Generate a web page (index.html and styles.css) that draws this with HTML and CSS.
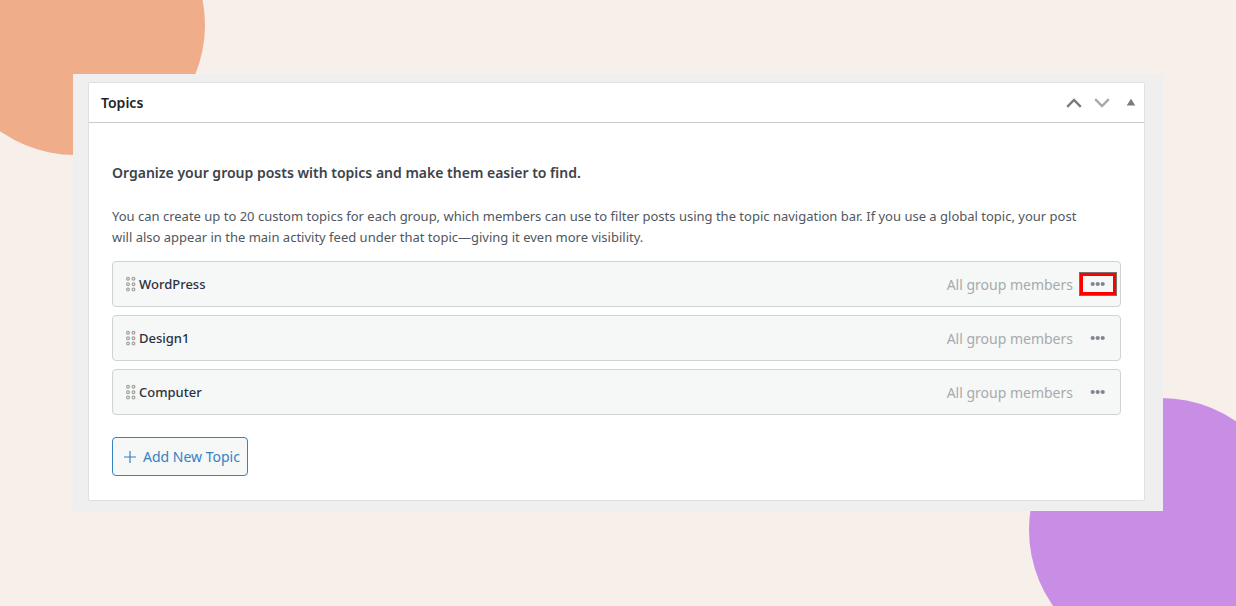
FILE: index.html
```html
<!DOCTYPE html>
<html lang="en">
<head>
<meta charset="utf-8">
<meta name="viewport" content="width=device-width, initial-scale=1">
<title>Topics</title>
<link rel="stylesheet" href="styles.css">
</head>
<body>
<div class="stage">
<div class="blob blob-orange"></div>
<div class="blob blob-purple"></div>
<main class="frame">
  <section class="card">
    <header class="card-header">
      <h2 class="card-title">Topics</h2>
      <div class="card-actions">
        <button class="icon-button" type="button" aria-label="Move up"><svg width="16" height="10" viewBox="0 0 16 10"><path d="M1.200 8.800 8 2l6.800 6.800" fill="none" stroke="#787c82" stroke-width="2.400"/></svg></button>
        <button class="icon-button" type="button" aria-label="Move down"><svg width="16" height="10" viewBox="0 0 16 10"><path d="M1.200 1.200 8 8l6.800-6.800" fill="none" stroke="#a7aaad" stroke-width="2.400"/></svg></button>
        <button class="icon-button toggle" type="button" aria-label="Toggle panel"><svg width="10" height="10" viewBox="0 0 10 10"><path d="M5 .8 9.300 7.500H.7z" fill="#787c82"/></svg></button>
      </div>
    </header>
    <div class="card-body">
      <h3 class="lead">Organize your group posts with topics and make them easier to find.</h3>
      <p class="description">You can create up to 20 custom topics for each group, which members can use to filter posts using the topic navigation bar. If you use a global topic, your post will also appear in the main activity feed under that topic—giving it even more visibility.</p>
      <ul class="topics">
        <li class="topic">
          <svg class="grip" width="10" height="16" viewBox="0 0 10 16"><g fill="none" stroke="#a3a19c" stroke-width="1.200"><circle cx="2" cy="2.800" r="1.400"/><circle cx="7.500" cy="2.800" r="1.400"/><circle cx="2" cy="8.200" r="1.400"/><circle cx="7.500" cy="8.200" r="1.400"/><circle cx="2" cy="13.600" r="1.400"/><circle cx="7.500" cy="13.600" r="1.400"/></g></svg>
          <span class="topic-name">WordPress</span>
          <span class="audience">All group members</span>
          <button class="more more-highlight" type="button" aria-label="WordPress options"><svg width="16" height="6" viewBox="0 0 16 6"><g fill="#83858f"><circle cx="2.700" cy="3" r="2.100"/><circle cx="7.700" cy="3" r="2.100"/><circle cx="12.700" cy="3" r="2.100"/></g></svg></button>
        </li>
        <li class="topic">
          <svg class="grip" width="10" height="16" viewBox="0 0 10 16"><g fill="none" stroke="#a3a19c" stroke-width="1.200"><circle cx="2" cy="2.800" r="1.400"/><circle cx="7.500" cy="2.800" r="1.400"/><circle cx="2" cy="8.200" r="1.400"/><circle cx="7.500" cy="8.200" r="1.400"/><circle cx="2" cy="13.600" r="1.400"/><circle cx="7.500" cy="13.600" r="1.400"/></g></svg>
          <span class="topic-name">Design1</span>
          <span class="audience">All group members</span>
          <button class="more" type="button" aria-label="Design1 options"><svg width="16" height="6" viewBox="0 0 16 6"><g fill="#83858f"><circle cx="2.700" cy="3" r="2.100"/><circle cx="7.700" cy="3" r="2.100"/><circle cx="12.700" cy="3" r="2.100"/></g></svg></button>
        </li>
        <li class="topic">
          <svg class="grip" width="10" height="16" viewBox="0 0 10 16"><g fill="none" stroke="#a3a19c" stroke-width="1.200"><circle cx="2" cy="2.800" r="1.400"/><circle cx="7.500" cy="2.800" r="1.400"/><circle cx="2" cy="8.200" r="1.400"/><circle cx="7.500" cy="8.200" r="1.400"/><circle cx="2" cy="13.600" r="1.400"/><circle cx="7.500" cy="13.600" r="1.400"/></g></svg>
          <span class="topic-name">Computer</span>
          <span class="audience">All group members</span>
          <button class="more" type="button" aria-label="Computer options"><svg width="16" height="6" viewBox="0 0 16 6"><g fill="#83858f"><circle cx="2.700" cy="3" r="2.100"/><circle cx="7.700" cy="3" r="2.100"/><circle cx="12.700" cy="3" r="2.100"/></g></svg></button>
        </li>
      </ul>
      <button class="add-topic" type="button"><svg width="12" height="12" viewBox="0 0 12 12"><path d="M6 0v12M0 6h12" stroke="#3582c4" stroke-width="1.200"/></svg>Add New Topic</button>
    </div>
  </section>
</main>
</div>
</body>
</html>
```
FILE: styles.css
```css
* {
  box-sizing: border-box;
}

body {
  margin: 0;
  background: #f7efe9;
  color: #50575e;
  font-family: "Noto Sans", "Open Sans", sans-serif;
  font-size: 13px;
}

button {
  font-family: inherit;
  cursor: pointer;
}

svg {
  display: block;
}

.stage {
  position: relative;
  min-height: 100vh;
  padding: 74px 73px 95px;
  overflow: hidden;
}

.blob {
  position: absolute;
  border-radius: 50%;
}

.blob-orange {
  top: -105px;
  left: -55px;
  width: 260px;
  height: 260px;
  background: #efad89;
}

.blob-purple {
  right: -57px;
  bottom: -56px;
  width: 264px;
  height: 264px;
  background: #c88de5;
}

.frame {
  position: relative;
  padding: 8px 18px 10px 15px;
  background: #efefef;
}

.card {
  border: 1px solid #e0e0e2;
  border-radius: 2px;
  background: #fff;
}

.card-header {
  display: flex;
  align-items: center;
  justify-content: space-between;
  height: 40px;
  padding: 0 8px 0 12px;
  border-bottom: 1px solid #c9cbcd;
}

.card-title {
  margin: 0;
  color: #1d2327;
  font-size: 14px;
  font-weight: 600;
  line-height: 20px;
}

.card-actions {
  display: flex;
  align-items: center;
  gap: 12px;
}

.icon-button {
  padding: 0;
  border: 0;
  background: none;
}

.toggle {
  margin-left: 4px;
}

.card-body {
  padding: 39px 23px 24px;
}

.lead {
  margin: 0 0 22px;
  color: #3c434a;
  font-size: 14px;
  font-weight: 600;
  line-height: 22px;
}

.description {
  margin: 0 0 13px;
  padding-right: 24px;
  line-height: 21px;
}

.topics {
  display: grid;
  gap: 8px;
  margin: 0 0 22px;
  padding: 0;
  list-style: none;
}

.topic {
  display: flex;
  align-items: center;
  height: 46px;
  padding: 0 3px 0 13px;
  border: 1px solid #d0d3d3;
  border-radius: 4px;
  background: #f6f8f7;
}

.grip {
  margin-right: 3px;
}

.topic-name {
  flex: 1;
  color: #2c3040;
  font-weight: 500;
}

.audience {
  margin-right: 6px;
  color: #a7aaad;
  font-size: 14px;
}

.more {
  display: grid;
  place-items: center;
  width: 38px;
  height: 24px;
  padding: 0;
  border: 4px solid transparent;
  background: none;
}

.more-highlight {
  border-color: #f00;
  outline: 1px solid #7c6f70;
  outline-offset: -1px;
}

.add-topic {
  display: flex;
  align-items: center;
  gap: 7px;
  height: 39px;
  padding: 0 7px 0 11px;
  border: 1px solid #3582c4;
  border-radius: 4px;
  background: #f6f7f7;
  color: #3582c4;
  font-size: 14px;
}
```
